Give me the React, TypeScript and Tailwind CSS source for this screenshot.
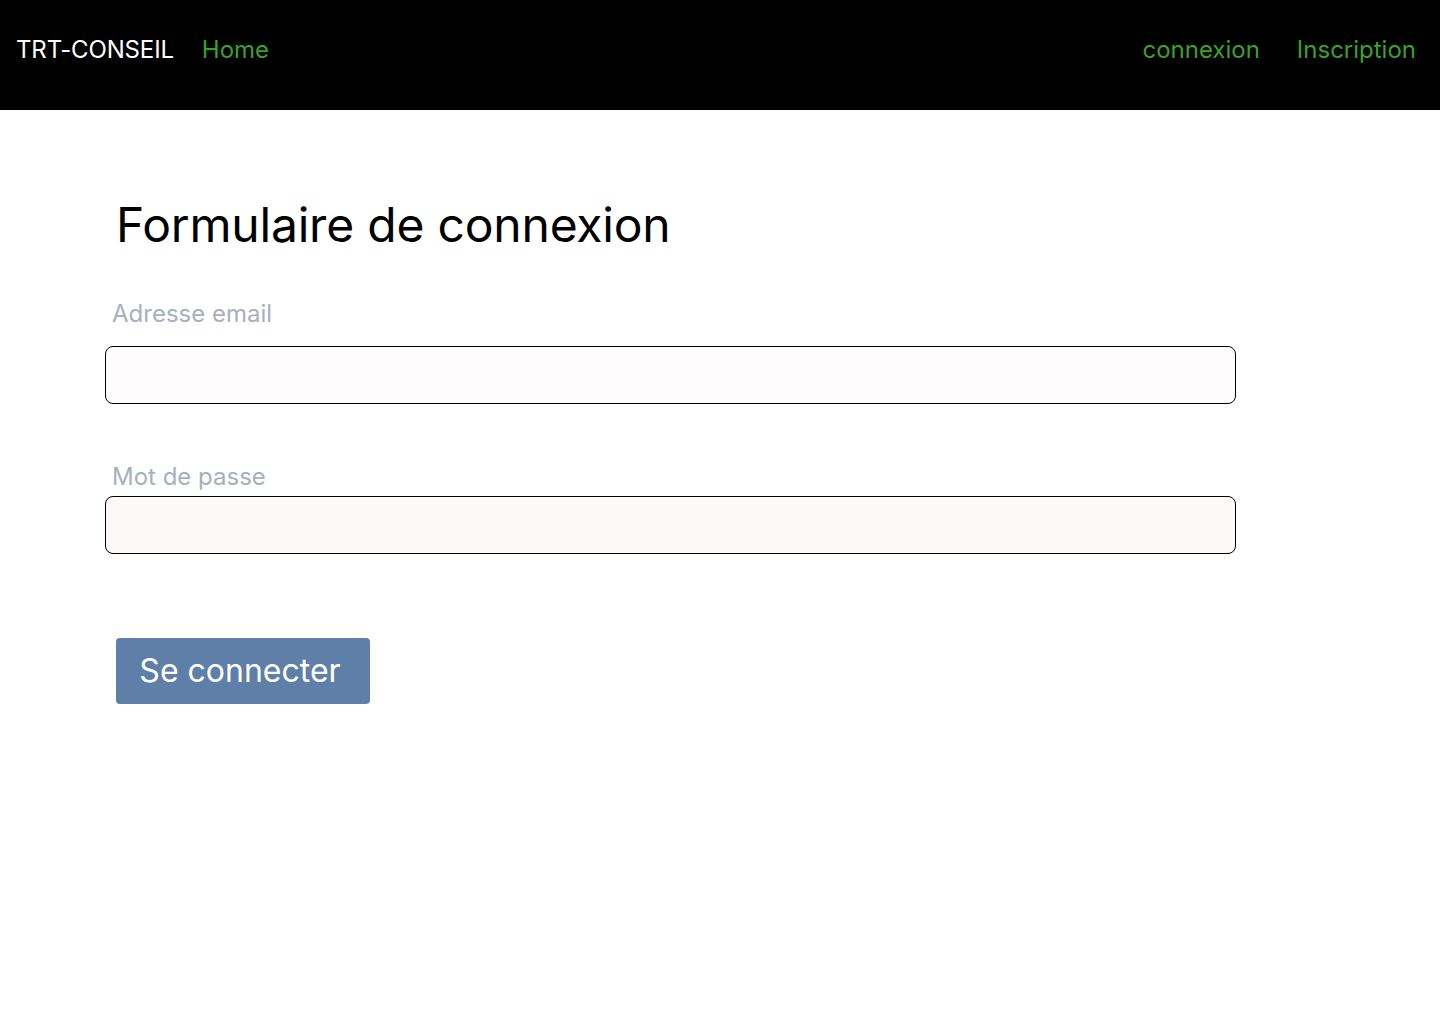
import React from "react";

export default function App() {
  return (
    <div className="min-h-screen bg-white" style={{ fontFamily: "Inter, 'Noto Sans', sans-serif" }}>
      <nav className="h-[110px] bg-black flex items-center justify-between pl-4 pr-6 pb-[10px]">
        <div className="flex items-center gap-[28px]">
          <span className="text-[24px] text-white leading-none tracking-[-0.15px]">TRT-CONSEIL</span>
          <a className="text-[24px] text-[#3ba12b] leading-none">Home</a>
        </div>
        <div className="flex items-center gap-[37px]">
          <a className="text-[24px] text-[#3ba12b] leading-none">connexion</a>
          <a className="text-[24px] text-[#3ba12b] leading-none">Inscription</a>
        </div>
      </nav>
      <main className="pl-[105px] pt-[86px]">
        <h1 className="ml-[11px] text-[48px] leading-[58px] text-black tracking-[-0.2px]">Formulaire de connexion</h1>
        <div className="mt-[45px]">
          <label className="block ml-[7px] text-[24px] leading-[30px] text-[#a7b0bd]">Adresse email</label>
          <input type="email" className="mt-[17px] block w-[1131px] h-[58px] rounded-[8px] border border-black bg-[#fffcfd]" />
        </div>
        <div className="mt-[58px]">
          <label className="block ml-[7px] text-[24px] leading-[30px] text-[#a7b0bd]">Mot de passe</label>
          <input type="password" className="mt-[4px] block w-[1131px] h-[58px] rounded-[8px] border border-black bg-[#fdf9f8]" />
        </div>
        <button className="ml-[11px] mt-[84px] w-[254px] h-[66px] rounded-[4px] bg-[#5e7fa8] text-white text-[32px] leading-none pr-[6px]">
          Se connecter
        </button>
      </main>
    </div>
  );
}
